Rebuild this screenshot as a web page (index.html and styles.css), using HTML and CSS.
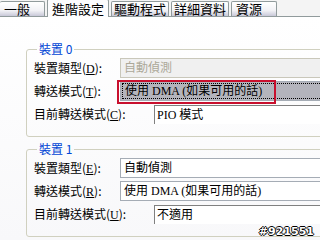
FILE: index.html
```html
<!DOCTYPE html>
<html lang="zh-Hant">
<head>
<meta charset="UTF-8">
<title>進階設定</title>
<link rel="stylesheet" href="styles.css">
</head>
<body>
  <div class="dialog">
    <div class="tabs">
      <div class="tab short first">一般</div>
      <div class="tab active">進階設定</div>
      <div class="tab">驅動程式</div>
      <div class="tab">詳細資料</div>
      <div class="tab short">資源</div>
    </div>

    <div class="panel">
      <fieldset class="group">
        <legend>裝置 0</legend>
        <div class="row">
          <span class="label">裝置類型(<u>D</u>):</span>
          <div class="combo disabled">自動偵測</div>
        </div>
        <div class="row">
          <span class="label">轉送模式(<u>T</u>):</span>
          <div class="combo selected"><span class="focus">使用 DMA (如果可用的話)</span></div>
          <div class="mark"></div>
        </div>
        <div class="row">
          <span class="label wide">目前轉送模式(<u>C</u>):</span>
          <div class="field">PIO 模式</div>
        </div>
      </fieldset>

      <fieldset class="group">
        <legend>裝置 1</legend>
        <div class="row">
          <span class="label">裝置類型(<u>E</u>):</span>
          <div class="combo">自動偵測</div>
        </div>
        <div class="row">
          <span class="label">轉送模式(<u>R</u>):</span>
          <div class="combo">使用 DMA (如果可用的話)</div>
        </div>
        <div class="row">
          <span class="label wide">目前轉送模式(<u>U</u>):</span>
          <div class="field">不適用</div>
        </div>
      </fieldset>
    </div>

    <div class="stamp">#921551</div>
  </div>
</body>
</html>
```

FILE: styles.css
```css
body {
  margin: 0;
  width: 320px;
  height: 240px;
  overflow: hidden;
  font-family: "Liberation Serif", "Noto Sans CJK TC", serif;
  font-size: 12px;
  color: #000;
}

.dialog {
  position: relative;
  width: 320px;
  height: 240px;
  overflow: hidden;
  background: #f4f4f4;
}

/* tab strip */
.tabs {
  display: flex;
  align-items: flex-end;
  height: 16px;
  border-bottom: 1px solid #919b9c;
}

.tab {
  height: 14px;
  line-height: 14px;
  padding: 0 2px;
  margin-right: 2px;
  border: 1px solid #919b9c;
  border-bottom: none;
  border-radius: 2px 2px 0 0;
  background: linear-gradient(#ffffff, #f2f2f6 60%, #c8c8d8);
  font-family: "Noto Sans CJK TC", sans-serif;
  font-size: 13px;
  white-space: nowrap;
}

.tab.short {
  padding: 0 14px 0 4px;
}

.tab.first {
  border-left: none;
}

.tab.active {
  height: 17px;
  line-height: 17px;
  margin-bottom: -1px;
  padding: 0 4px;
  background: #fcfcfe;
}

.panel {
  height: 223px;
  padding-top: 25px;
  box-sizing: border-box;
  overflow: hidden;
  background: linear-gradient(#ffffff, #f8f8fa);
}

.group {
  margin: 0 -20px 5px 26px;
  padding: 2px 0 12px 7px;
  border: 1px solid #d0d0bf;
  border-radius: 3px;
}

.group legend {
  padding: 0 2px;
  margin-left: 3px;
  color: #0046d5;
  font-family: "Noto Sans CJK TC", sans-serif;
  font-size: 12px;
  line-height: 14px;
}

.row {
  position: relative;
  display: flex;
  align-items: center;
  height: 20px;
  margin-bottom: 3px;
}

.row:last-child {
  margin-bottom: 0;
}

.label {
  width: 86px;
  flex: none;
  font-family: "Noto Sans CJK TC", sans-serif;
}

.label.wide {
  width: 120px;
}

.label u {
  font-family: "Liberation Serif", serif;
}

.combo {
  flex: 1;
  height: 18px;
  line-height: 18px;
  padding-left: 3px;
  border: 1px solid #a5acb5;
  background: #fff;
  white-space: nowrap;
}

.combo.disabled {
  color: #aca899;
  background: #f0f0f0;
  border-color: #c9c7ba;
}

.combo.selected {
  background: #b4b4bc;
  padding-left: 1px;
}

.focus {
  display: block;
  height: 14px;
  line-height: 14px;
  margin-top: 1px;
  padding-left: 2px;
  border: 1px dotted #000;
  border-right: none;
}

.field {
  flex: 1;
  height: 18px;
  line-height: 18px;
  padding-left: 2px;
  border-top: 1px solid #808080;
  border-left: 1px solid #808080;
  background: #fff;
}

/* red annotation drawn over the screenshot */
.mark {
  position: absolute;
  left: 83px;
  top: -1px;
  width: 155px;
  height: 20px;
  border: 2px solid #c8102e;
}

.stamp {
  position: absolute;
  right: 6px;
  bottom: 2px;
  color: #fff;
  font-family: "DejaVu Sans", sans-serif;
  font-weight: bold;
  font-size: 11px;
  text-shadow: -1px 0 #000, 1px 0 #000, 0 -1px #000, 0 1px #000;
}
```
